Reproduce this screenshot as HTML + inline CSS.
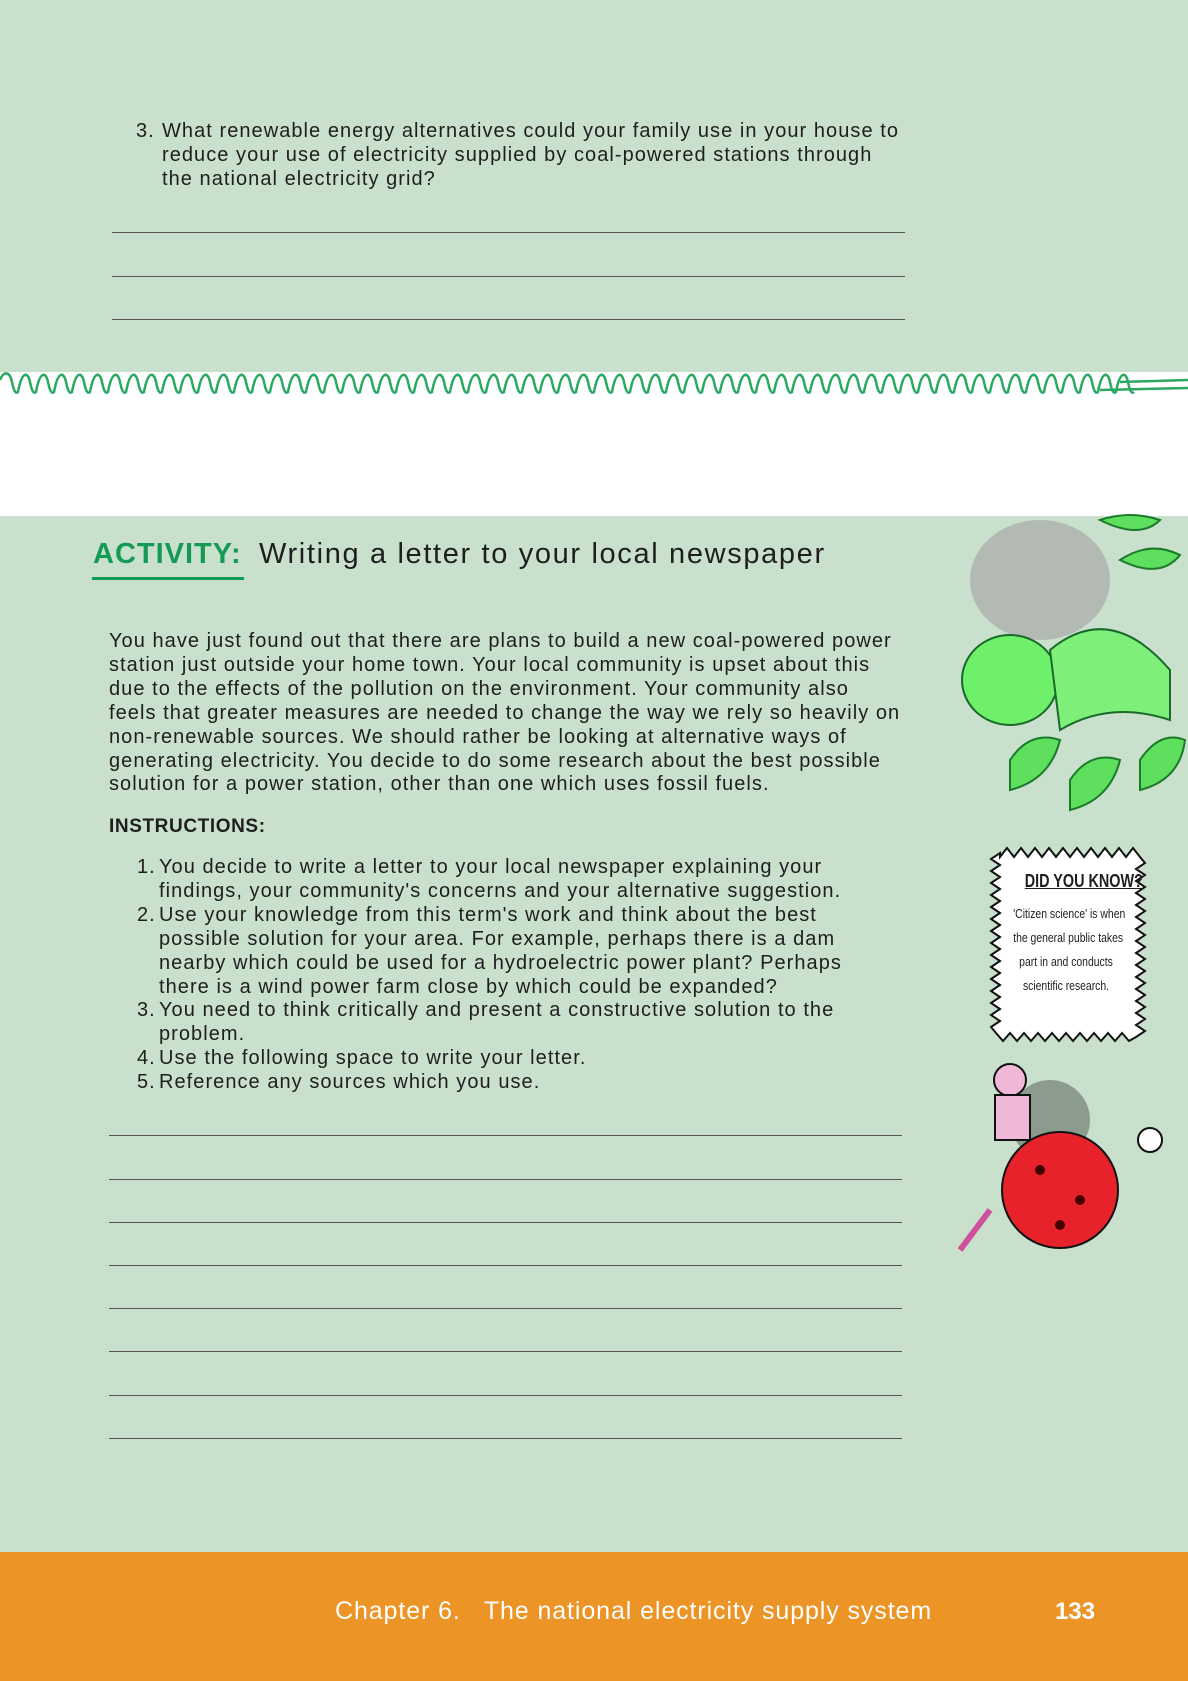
<!DOCTYPE html>
<html><head><meta charset="utf-8"><style>
*{margin:0;padding:0;box-sizing:border-box}
body{width:1188px;height:1681px;position:relative;background:#c8e0cc;font-family:"Liberation Sans",sans-serif;color:#1e1e1e;overflow:hidden}
.a{position:absolute;white-space:nowrap}
.t{font-size:20px;line-height:23.9px;letter-spacing:1.05px}
.ln{position:absolute;height:1px;background:#555}
.li{position:relative;padding-left:22px}
.li b{position:absolute;left:0;font-weight:normal}
</style></head><body>
<div class="a t" style="left:136px;top:120px"><div class="li" style="padding-left:26px"><b>3.</b>What renewable energy alternatives could your family use in your house to<br>reduce your use of electricity supplied by coal-powered stations through<br>the national electricity grid?</div></div>
<div class="ln" style="left:112px;width:793px;top:232px"></div>
<div class="ln" style="left:112px;width:793px;top:276px"></div>
<div class="ln" style="left:112px;width:793px;top:319px"></div>

<div class="a" style="left:0;top:372px;width:1188px;height:144px;background:#fff"></div>
<svg class="a" style="left:0;top:368px" width="1188" height="38" viewBox="0 0 1188 38">
<g fill="none" stroke="#2aa862" stroke-width="2.5">
<path id="w1" d=""/>
<path id="w2" d=""/>
</g></svg>

<div class="a" style="left:93px;top:538px;font-size:29px;font-weight:bold;color:#139a55;letter-spacing:1px">ACTIVITY:</div>
<div class="a" style="left:92px;top:577px;width:152px;height:3px;background:#139a55"></div>
<div class="a" style="left:259px;top:538px;font-size:29px;color:#1e1e1e;letter-spacing:1.65px">Writing a letter to your local newspaper</div>

<div class="a t" style="left:109px;top:630px">You have just found out that there are plans to build a new coal-powered power<br>station just outside your home town. Your local community is upset about this<br>due to the effects of the pollution on the environment. Your community also<br>feels that greater measures are needed to change the way we rely so heavily on<br>non-renewable sources. We should rather be looking at alternative ways of<br>generating electricity. You decide to do some research about the best possible<br>solution for a power station, other than one which uses fossil fuels.</div>
<div class="a" style="left:109px;top:816px;font-size:19px;font-weight:bold;letter-spacing:0.6px">INSTRUCTIONS:</div>
<div class="a t" style="left:137px;top:856px">
<div class="li"><b>1.</b>You decide to write a letter to your local newspaper explaining your<br>findings, your community's concerns and your alternative suggestion.</div>
<div class="li"><b>2.</b>Use your knowledge from this term's work and think about the best<br>possible solution for your area. For example, perhaps there is a dam<br>nearby which could be used for a hydroelectric power plant? Perhaps<br>there is a wind power farm close by which could be expanded?</div>
<div class="li"><b>3.</b>You need to think critically and present a constructive solution to the<br>problem.</div>
<div class="li"><b>4.</b>Use the following space to write your letter.</div>
<div class="li"><b>5.</b>Reference any sources which you use.</div>
</div>

<div class="ln" style="left:109px;width:793px;top:1135px"></div>
<div class="ln" style="left:109px;width:793px;top:1179px"></div>
<div class="ln" style="left:109px;width:793px;top:1222px"></div>
<div class="ln" style="left:109px;width:793px;top:1265px"></div>
<div class="ln" style="left:109px;width:793px;top:1308px"></div>
<div class="ln" style="left:109px;width:793px;top:1351px"></div>
<div class="ln" style="left:109px;width:793px;top:1395px"></div>
<div class="ln" style="left:109px;width:793px;top:1438px"></div>

<svg class="a" style="left:950px;top:500px" width="238" height="330">
<ellipse cx="90" cy="80" rx="70" ry="60" fill="#aaa" opacity="0.7"/>
<path d="M150 20 q30 -10 60 0 q-20 20 -60 0z" fill="#5ee05e" stroke="#1a7a2a" stroke-width="2"/>
<path d="M170 60 q30 -20 60 -5 q-20 25 -60 5z" fill="#5ee05e" stroke="#1a7a2a" stroke-width="2"/>
<ellipse cx="60" cy="180" rx="48" ry="45" fill="#6ef06a" stroke="#1a6a2a" stroke-width="2"/>
<path d="M100 150 q60 -50 120 20 l0 50 q-60 -20 -110 10z" fill="#7ef07a" stroke="#1a6a2a" stroke-width="2"/>
<path d="M60 260 q20 -30 50 -20 q-10 40 -50 50z" fill="#5ee05e" stroke="#1a7a2a" stroke-width="2"/>
<path d="M120 280 q20 -30 50 -20 q-10 40 -50 50z" fill="#5ee05e" stroke="#1a7a2a" stroke-width="2"/>
<path d="M190 260 q20 -30 45 -20 q-5 40 -45 50z" fill="#5ee05e" stroke="#1a7a2a" stroke-width="2"/>
</svg>

<svg class="a" style="left:988px;top:845px" width="160" height="200">
<path id="zz" d="" fill="#fff" stroke="#111" stroke-width="2"/>
</svg>
<div class="a" style="left:1010px;top:871px;width:112px;text-align:center"><span style="display:inline-block;font-size:18px;font-weight:bold;text-decoration:underline;transform:scaleX(0.8)">DID YOU KNOW?</span></div>
<div class="a" style="left:1000px;top:902px;width:132px;text-align:center;font-size:13px;line-height:24px"><div style="transform:scaleX(0.8)">'Citizen science' is when<br>the general public takes<br>part in and conducts<br>scientific research.</div></div>

<svg class="a" style="left:950px;top:1040px" width="220" height="230">
<circle cx="100" cy="80" r="40" fill="#1a1a1a" opacity="0.35"/>
<circle cx="110" cy="150" r="58" fill="#e8222a" stroke="#111" stroke-width="2"/>
<circle cx="90" cy="130" r="5" fill="#400"/><circle cx="130" cy="160" r="5" fill="#400"/><circle cx="110" cy="185" r="5" fill="#400"/>
<circle cx="60" cy="40" r="16" fill="#f0b8d8" stroke="#111" stroke-width="2"/>
<rect x="45" y="55" width="35" height="45" fill="#f0b8d8" stroke="#111" stroke-width="2"/>
<circle cx="200" cy="100" r="12" fill="#fff" stroke="#111" stroke-width="2"/>
<path d="M10 210 l30 -40" stroke="#d050a0" stroke-width="6"/>
</svg>

<div class="a" style="left:0;top:1552px;width:1188px;height:129px;background:#ec9426"></div>
<div class="a" style="left:335px;top:1597px;font-size:25px;color:#fff;letter-spacing:0.9px">Chapter 6.&nbsp;&nbsp; The national electricity supply system</div>
<div class="a" style="left:1055px;top:1598px;font-size:24px;color:#fff;font-weight:bold">133</div>
<script>
(function(){
 var d1="M0 12";
 for(var x=0;x<1120;x+=18){d1+=" C"+(x+4)+" 2 "+(x+10)+" 4 "+(x+12)+" 14 S"+(x+16)+" 26 "+(x+18)+" 24";}
 document.getElementById('w1').setAttribute('d',d1);
 document.getElementById('w2').setAttribute('d',"M1120 14 L1188 12 M1100 22 L1188 20");
 var p="M12 12",x,y;
 for(x=12;x<145;x+=14){p+=" L"+(x+7)+" 3 L"+(x+14)+" 12";}
 for(y=12;y<185;y+=12){p+=" L157 "+(y+6)+" L148 "+(y+12);}
 for(x=148;x>14;x-=14){p+=" L"+(x-7)+" 196 L"+(x-14)+" 188";}
 for(y=188;y>14;y-=12){p+=" L3 "+(y-6)+" L12 "+(y-12);}
 document.getElementById('zz').setAttribute('d',p+"Z");
})();
</script>
</body></html>
